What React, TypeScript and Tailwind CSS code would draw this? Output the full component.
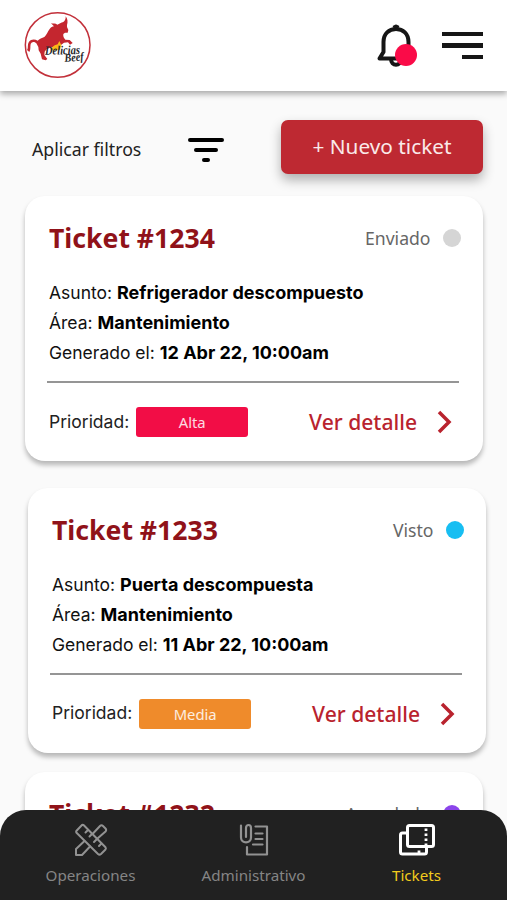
import type { ReactNode } from "react";

type Ticket = {
  id: number;
  status: string;
  dot: string;
  offset: string;
  details?: {
    subject: string;
    area: string;
    date: string;
    priority: string;
    priorityColor: string;
  };
};

const tickets: Ticket[] = [
  {
    id: 1234,
    status: "Enviado",
    dot: "bg-[#d5d5d5]",
    offset: "ml-[25px] mb-[26.6px]",
    details: {
      subject: "Refrigerador descompuesto",
      area: "Mantenimiento",
      date: "12 Abr 22, 10:00am",
      priority: "Alta",
      priorityColor: "bg-[#f20d46]",
    },
  },
  {
    id: 1233,
    status: "Visto",
    dot: "bg-[#17bef2]",
    offset: "ml-[28px] mb-[19.4px]",
    details: {
      subject: "Puerta descompuesta",
      area: "Mantenimiento",
      date: "11 Abr 22, 10:00am",
      priority: "Media",
      priorityColor: "bg-[#ef8b2b]",
    },
  },
  {
    id: 1232,
    status: "Agendado",
    dot: "bg-[#8b45ea]",
    offset: "ml-[25px]",
  },
];

function Logo() {
  return (
    <svg className="-mt-0.5" width="74" height="74" viewBox="0 0 222 222">
      <circle cx="113" cy="111" r="97" fill="#fff" stroke="#c2303a" strokeWidth="4.500" />
      <path
        d="M137 25 C143 32 144 43 141 51 L141 57 L145 66 L143 74 L135 74 L130 78 C129 84 131 90 136 95 L149 96 L158 105 L150 110 L144 103 L132 104 L122 112 L95 118 L80 123 L74 131 L73 141 L82 153 L77 157 L66 154 L62 137 L56 127 L55 117 L49 106 C42 99 35 101 32 108 C30 116 33 124 28 132 L21 126 C26 120 21 110 27 101 C33 93 45 93 53 98 C58 92 66 91 73 87 C80 81 83 71 89 63 C93 58 97 56 102 55 L93 46 C99 47 107 46 112 50 L122 45 C131 43 138 38 137 25 Z"
        fill="#c4262f"
      />
      <path d="M93 121 L104 112 L113 109 L118 99 L124 112 L120 125 L98 128 Z" fill="#fbb917" />
      <text
        x="75"
        y="140"
        transform="rotate(-1 75 140)"
        textLength="105"
        lengthAdjust="spacingAndGlyphs"
        fontFamily="'Liberation Serif', serif"
        fontSize="38"
        fontWeight="bold"
        fontStyle="italic"
        fill="#26272b"
      >
        Delicias
      </text>
      <text
        x="134"
        y="162"
        transform="rotate(-5 134 162)"
        textLength="58"
        lengthAdjust="spacingAndGlyphs"
        fontFamily="'Liberation Serif', serif"
        fontSize="35"
        fontWeight="bold"
        fontStyle="italic"
        fill="#26272b"
      >
        Beef
      </text>
    </svg>
  );
}

function BellIcon() {
  return (
    <svg width="42" height="46" viewBox="0 0 42 46" fill="none" stroke="#161616" strokeWidth="4" strokeLinejoin="round">
      <path d="M3.500 35.500 L7.500 29 V19 C7.500 10.500 13 6 20 6 C27 6 32.500 10.500 32.500 19 V29 L36 35.500 Z" />
      <path d="M17.500 4.800 L20 3.500 L22.500 4.800" />
      <path d="M15 36 C15 43.500 25 43.500 25 36" />
    </svg>
  );
}

function OperationsIcon() {
  return (
    <svg width="34" height="34" viewBox="0 0 34 34" fill="none" stroke="#929292" strokeWidth="2" strokeLinejoin="round" strokeLinecap="round">
      <path d="M8 2 L2.300 8 Q1.800 9 2.500 9.800 L24 31 Q25.500 32.200 27 31 L31.500 26.500 Q32.300 25.500 31.500 24.300 L9.800 2.300 Q9 1.500 8 2 Z" />
      <path d="M14 7 L11.500 9.500 M18 11 L15.500 13.500 M23 16 L20 19 M27.500 20.500 L25 23" />
      <path d="M18.500 11 L26 3 Q27.500 1.500 29 3 L31.500 5.500 Q32.800 7 31.500 8.500 L23.500 15.500" />
      <path d="M10.500 18 L2 26 V32 H8 L16 23.500" />
    </svg>
  );
}

function AdminIcon() {
  return (
    <svg width="34" height="34" viewBox="0 0 34 34" fill="none" stroke="#929292" strokeWidth="2.200" strokeLinejoin="round" strokeLinecap="round">
      <path d="M4 2.500 V14.500 C4 21 14 21 14 14.500 V5 C14 1 9 1 9 5 V14" />
      <path d="M18.500 3.500 H30 V31.500 H10 V24" />
      <path d="M18.500 10.500 H25.500 M18.500 16 H25.500 M16 21.500 H25.500" />
    </svg>
  );
}

function TicketsIcon() {
  return (
    <svg width="38" height="34" viewBox="0 0 38 34" fill="none" stroke="#fff" strokeWidth="3" strokeLinejoin="round">
      <path d="M11.500 2.500 H33.500 Q35.500 2.500 35.500 4.500 V21.500 Q35.500 23.500 33.500 23.500 H11.500 Q9.500 23.500 9.500 21.500 V4.500 Q9.500 2.500 11.500 2.500 Z" />
      <path d="M9 10 H4.500 Q2.500 10 2.500 12 V29 Q2.500 31 4.500 31 H26.500 Q28.500 31 28.500 29 V24" />
      <path d="M28 5.500 V22" strokeWidth="2.800" strokeDasharray="2.500 2.500" />
      <path d="M21 27.500 V30" strokeWidth="2.800" />
    </svg>
  );
}

function TicketCard({ ticket }: { ticket: Ticket }) {
  const { details } = ticket;

  return (
    <article
      className={`w-[458px] shrink-0 rounded-[20px] bg-white px-6 shadow-[0_4px_5px_rgba(0,0,0,0.27)] ${ticket.offset}`}
    >
      <div className="flex h-[82px] items-center pt-0.5">
        <h2 className="pt-0.5 text-[26.6px] font-bold text-[#901219]">Ticket #{ticket.id}</h2>
        <span className="ml-auto pt-px text-[17.6px] text-[#666]">{ticket.status}</span>
        <span className={`-mr-[1.500px] ml-3 size-[18px] rounded-full ${ticket.dot}`} />
      </div>
      {details ? (
        <div className="h-[183px]">
          <div className="h-[103px] font-[Inter,sans-serif] text-[17.5px] leading-[30px] text-[#111]">
            <p>
              Asunto: <b className="text-[18px] font-bold text-black">{details.subject}</b>
            </p>
            <p>
              Área: <b className="text-[18px] font-bold text-black">{details.area}</b>
            </p>
            <p>
              Generado el: <b className="text-[18px] font-bold text-black">{details.date}</b>
            </p>
          </div>
          <div className="-mx-0.5 w-[412px] border-t-2 border-[#959595]" />
          <div className="flex h-[78px] items-center">
            <span className="font-[Inter,sans-serif] text-[17.5px] text-[#222]">Prioridad:</span>
            <span
              className={`ml-[7px] flex h-[30px] w-[112px] items-center justify-center rounded-[3px] pt-px text-[14.8px] text-white/85 ${details.priorityColor}`}
            >
              {details.priority}
            </span>
            <a className="mr-[7px] ml-auto flex items-center gap-5 text-[21.1px] font-medium text-[#b9232e]">
              Ver detalle
              <svg width="15" height="24" viewBox="0 0 15 24" fill="none" stroke="#b9232e" strokeWidth="3.500">
                <path d="M2 2 L12 12 L2 22" />
              </svg>
            </a>
          </div>
        </div>
      ) : (
        <div className="h-[102px]" />
      )}
    </article>
  );
}

function NavItem({ label, active, children }: { label: string; active?: boolean; children: ReactNode }) {
  return (
    <button className="flex w-[163px] flex-col items-center gap-[6px]">
      {children}
      <span className={`text-[15.2px] leading-6 ${active ? "text-[#f2cb1d]" : "text-[#858585]"}`}>{label}</span>
    </button>
  );
}

export default function App() {
  return (
    <div className="relative flex h-[900px] w-[507px] flex-col overflow-hidden bg-[#fafafa] font-['Noto_Sans',sans-serif]">
      <header className="flex h-[91px] shrink-0 items-center bg-white pr-6 pl-5 shadow-[0_3px_6px_rgba(0,0,0,0.33)]">
        <Logo />
        <div className="relative ml-auto">
          <BellIcon />
          <span className="absolute top-[21px] left-[19px] size-[22px] rounded-full bg-[#fa0b48]" />
        </div>
        <div className="ml-[24px] flex flex-col items-end gap-[7px]">
          <span className="h-[4.500px] w-[41px] bg-[#161616]" />
          <span className="h-[4.500px] w-[41px] bg-[#161616]" />
          <span className="h-[4.500px] w-[21px] bg-[#161616]" />
        </div>
      </header>

      <div className="flex h-[105px] shrink-0 items-start pt-[29px] pr-6 pl-8">
        <div className="flex h-[58px] w-[249px] items-center">
          <span className="text-[17.7px] text-[#222]">Aplicar filtros</span>
          <div className="mt-px ml-[47px] flex flex-col items-center gap-[6px]">
            <span className="h-1 w-[36px] rounded-full bg-black" />
            <span className="h-1 w-6 rounded-full bg-black" />
            <span className="h-1 w-2 rounded-full bg-black" />
          </div>
        </div>
        <button className="h-[54px] w-[202px] rounded-[7px] bg-[#be2932] text-[20.8px] text-[#fae9e9] shadow-[0_6px_12px_rgba(0,0,0,0.3)]">
          + Nuevo ticket
        </button>
      </div>

      <main className="flex flex-col">
        {tickets.map((ticket) => (
          <TicketCard key={ticket.id} ticket={ticket} />
        ))}
      </main>

      <nav className="absolute inset-x-0 bottom-0 flex h-[90px] items-start justify-center rounded-t-[26px] bg-[#212121] pt-[13px]">
        <NavItem label="Operaciones">
          <OperationsIcon />
        </NavItem>
        <NavItem label="Administrativo">
          <AdminIcon />
        </NavItem>
        <NavItem label="Tickets" active>
          <TicketsIcon />
        </NavItem>
      </nav>
    </div>
  );
}
